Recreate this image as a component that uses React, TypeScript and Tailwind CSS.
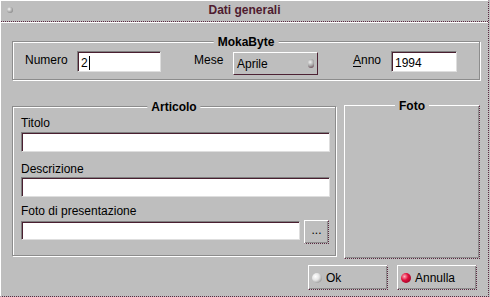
import type { ReactNode } from "react";

const dotted = "#5b2840";

/** Small shaded ball used as an icon on the title bar and buttons. */
function Ball({ tone, className = "" }: { tone: "grey" | "white" | "red"; className?: string }) {
  const fill =
    tone === "red"
      ? "bg-[radial-gradient(circle_at_35%_35%,#ffb0bc_0%,#e0103c_40%,#7a0020_100%)]"
      : tone === "white"
        ? "bg-[radial-gradient(circle_at_35%_35%,#ffffff_0%,#e4e4e4_40%,#6e6e6e_100%)]"
        : "bg-[radial-gradient(circle_at_35%_35%,#f4f4f4_0%,#b4b4b4_45%,#6a6a6a_100%)]";
  return <span className={`block shrink-0 rounded-full ${fill} ${className}`} />;
}

/** Etched group box with its title centred on the top line. */
function Group({ title, className = "", children }: { title: string; className?: string; children?: ReactNode }) {
  return (
    <div className={`relative shrink-0 border border-[#8c8c8c] shadow-[inset_1px_1px_0_#fff,1px_1px_0_#fff] ${className}`}>
      <span className="absolute -top-[7px] left-1/2 -translate-x-1/2 bg-[#bebebe] px-1 text-xs leading-[14px] font-bold text-black">
        {title}
      </span>
      {children}
    </div>
  );
}

/** Sunken white text field. */
function Field({ className = "", children }: { className?: string; children?: ReactNode }) {
  return (
    <div
      className={`flex shrink-0 items-center border border-t-[#808080] border-l-[#808080] border-r-[#dedede] border-b-[#dedede] bg-white pt-[2px] pl-[3px] text-xs leading-[14px] text-black shadow-[inset_1px_1px_0_#4a1f30] ${className}`}
    >
      {children}
    </div>
  );
}

/** Raised button: white top/left edge, dotted maroon bottom/right edge. */
function Raised({ className = "", children }: { className?: string; children?: ReactNode }) {
  return (
    <div
      className={`flex shrink-0 items-center border border-t-white border-l-white border-r-[#5b2840] border-b-[#5b2840] [border-right-style:dotted] [border-bottom-style:dotted] text-xs leading-[14px] text-black shadow-[inset_-1px_-1px_0_#8e8e8e] ${className}`}
    >
      {children}
    </div>
  );
}

function Label({ className = "", children }: { className?: string; children: ReactNode }) {
  return <div className={`shrink-0 text-xs leading-[14px] text-black ${className}`}>{children}</div>;
}

export default function App() {
  return (
    <div className="h-[297px] w-[490px] bg-[#bebebe] font-['Liberation_Sans',Arial,sans-serif]">
      <div
        className="flex h-[297px] w-[489px] flex-col border border-t-white border-l-white border-r-[#5b2840] border-b-[#5b2840] [border-right-style:dotted] [border-bottom-style:dotted]"
        style={{ borderRightColor: dotted, borderBottomColor: dotted }}
      >
        {/* Title bar */}
        <div className="grid h-[21px] shrink-0 grid-cols-[1fr_auto_1fr] border-b border-dotted border-b-[#5b2840] shadow-[0_1px_0_#fff]">
          <div className="pt-[6px] pl-[6px]">
            <Ball tone="grey" className="h-[6px] w-[6px]" />
          </div>
          <div className="pt-[2px] text-xs leading-[14px] font-bold text-[#4e1c30]">Dati generali</div>
          <div />
        </div>

        {/* MokaByte */}
        <Group title="MokaByte" className="mt-[19px] ml-[11px] h-[39px] w-[468px]">
          <div className="mt-[9px] flex items-start">
            <Label className="mt-[2px] ml-[12px] w-[52px]">Numero</Label>
            <Field className="h-[21px] w-[84px]">
              <span>2</span>
              <span className="ml-[1px] inline-block h-[14px] w-px bg-black" />
            </Field>
            <Label className="mt-[2px] ml-[33px] w-[39px]">Mese</Label>
            <div className="mt-[1px] flex h-[23px] w-[85px] shrink-0 items-center border border-t-white border-l-white border-r-[#4d2234] border-b-[#4d2234] pl-[3px] text-xs leading-[14px] text-black">
              <span>Aprile</span>
              <span className="mr-[3px] ml-auto block h-[9px] w-[6px] rounded-full bg-[radial-gradient(circle_at_35%_35%,#f0f0f0_0%,#a8a8a8_50%,#5a3040_100%)]" />
            </div>
            <Label className="mt-[2px] ml-[35px] w-[38px]">
              <span className="underline underline-offset-2">A</span>nno
            </Label>
            <Field className="h-[21px] w-[66px]">1994</Field>
          </div>
        </Group>

        {/* Articolo + Foto */}
        <div className="mt-[25px] flex items-start">
          <Group title="Articolo" className="mt-[1px] ml-[11px] h-[150px] w-[324px]">
            <div className="flex flex-col items-start pl-[8px]">
              <Label className="mt-[9px]">Titolo</Label>
              <Field className="mt-[2px] h-[20px] w-[309px]" />
              <Label className="mt-[10px]">Descrizione</Label>
              <Field className="mt-[1px] h-[20px] w-[309px]" />
              <Label className="mt-[7px]">Foto di presentazione</Label>
              <div className="mt-[2px] flex items-start">
                <Field className="mt-[1px] h-[19px] w-[279px]" />
                <Raised className="ml-[4px] h-[24px] w-[25px] justify-center pb-[4px]">...</Raised>
              </div>
            </div>
          </Group>
          <div className="relative ml-[8px] h-[154px] w-[136px] shrink-0 border border-t-white border-l-white border-r-[#5b2840] border-b-[#5b2840] [border-right-style:dotted] [border-bottom-style:dotted] shadow-[inset_-1px_-1px_0_#8e8e8e]">
            <span className="absolute -top-[7px] left-1/2 -translate-x-1/2 bg-[#bebebe] px-1 text-xs leading-[14px] font-bold text-black">
              Foto
            </span>
          </div>
        </div>

        {/* Buttons */}
        <div className="mt-[6px] flex">
          <Raised className="ml-[307px] h-[25px] w-[80px] gap-[4px] pl-[3px]">
            <Ball tone="white" className="h-[10px] w-[10px]" />
            <span>Ok</span>
          </Raised>
          <Raised className="ml-[9px] h-[25px] w-[80px] gap-[4px] pl-[3px]">
            <Ball tone="red" className="h-[10px] w-[10px]" />
            <span>Annulla</span>
          </Raised>
        </div>
      </div>
    </div>
  );
}
